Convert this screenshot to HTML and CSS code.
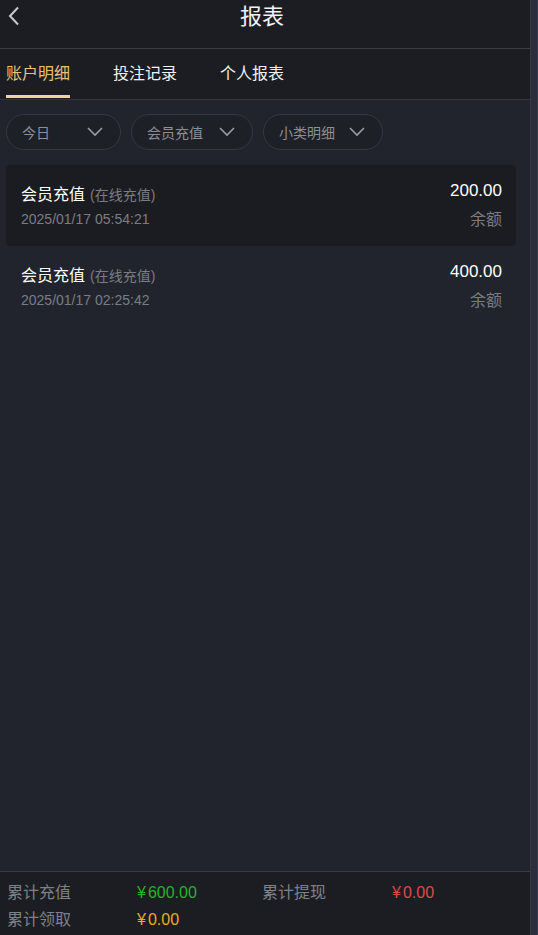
FILE: index.html
```html
<!DOCTYPE html>
<html lang="zh">
<head>
<meta charset="utf-8">
<title>报表</title>
<link rel="stylesheet" href="styles.css">
</head>
<body>
<div class="shell">
  <div class="app">
    <header class="topbar">
      <span class="back">
        <svg width="14" height="20" viewBox="0 0 14 20"><path d="M11 1.5 L3 10 L11 18.5" fill="none" stroke="#c9cad0" stroke-width="2"/></svg>
      </span>
      <h1 class="title">报表</h1>
    </header>
    <nav class="tabs">
      <span class="tab active">账户明细</span>
      <span class="tab">投注记录</span>
      <span class="tab">个人报表</span>
    </nav>
    <div class="filters">
      <div class="pill p1"><span>今日</span><svg width="16" height="10" viewBox="0 0 16 10"><path d="M1 1 L8 8 L15 1" fill="none" stroke="#9a9ca4" stroke-width="1.6"/></svg></div>
      <div class="pill p2"><span>会员充值</span><svg width="16" height="10" viewBox="0 0 16 10"><path d="M1 1 L8 8 L15 1" fill="none" stroke="#9a9ca4" stroke-width="1.6"/></svg></div>
      <div class="pill p3"><span>小类明细</span><svg width="16" height="10" viewBox="0 0 16 10"><path d="M1 1 L8 8 L15 1" fill="none" stroke="#9a9ca4" stroke-width="1.6"/></svg></div>
    </div>
    <main class="list">
      <div class="item shaded">
        <div class="left">
          <div class="name">会员充值<span class="sub">(在线充值)</span></div>
          <div class="date">2025/01/17 05:54:21</div>
        </div>
        <div class="right">
          <div class="amount">200.00</div>
          <div class="bal">余额</div>
        </div>
      </div>
      <div class="item">
        <div class="left">
          <div class="name">会员充值<span class="sub">(在线充值)</span></div>
          <div class="date">2025/01/17 02:25:42</div>
        </div>
        <div class="right">
          <div class="amount">400.00</div>
          <div class="bal">余额</div>
        </div>
      </div>
    </main>
    <footer class="summary">
      <span class="lbl">累计充值</span><span class="val green"><span class="cur">¥</span>600.00</span>
      <span class="lbl">累计提现</span><span class="val red"><span class="cur">¥</span>0.00</span>
      <span class="lbl">累计领取</span><span class="val orange"><span class="cur">¥</span>0.00</span>
    </footer>
  </div>
  <div class="scroll"></div>
</div>
</body>
</html>
```
FILE: styles.css
```css
* { box-sizing: border-box; margin: 0; padding: 0; }
html, body { width: 538px; height: 935px; overflow: hidden; }
body {
  background: #21242c;
  font-family: "Liberation Sans", "Noto Sans CJK SC", sans-serif;
  color: #fff;
}
.shell { display: flex; height: 935px; }
.app { width: 530px; display: flex; flex-direction: column; height: 935px; }
.scroll {
  width: 8px;
  background: #2c2e3b;
  border-left: 1px solid #363947;
  border-right: 1px solid #3a3d4c;
}
.topbar {
  height: 49px;
  background: #1c1d22;
  border-bottom: 1px solid #3a3c43;
  display: flex;
  align-items: flex-start;
  justify-content: center;
  position: relative;
}
.back { position: absolute; left: 7px; top: 6px; }
.title { font-size: 22px; font-weight: normal; line-height: 34px; color: #f2f2f4; margin-right: 6px; }
.tabs {
  height: 51px;
  background: #1c1d22;
  border-bottom: 1px solid #34363d;
  display: flex;
  gap: 43px;
  padding-left: 6px;
}
.tab {
  font-size: 16px;
  line-height: 48px;
  color: #f2f2f4;
  padding-top: 1px;
  height: 50px;
}
.tab.active {
  color: #e8c27d;
  border-bottom: 3px solid #f0d49e;
  height: 49px;
}
.filters { display: flex; gap: 10px; padding: 14px 6px 0; }
.pill {
  height: 36px;
  border: 1px solid #353842;
  border-radius: 18px;
  background: #1e2027;
  display: flex;
  align-items: center;
  justify-content: space-between;
  padding: 0 17px 0 15px;
  font-size: 14px;
  color: #8d8f97;
}
.p1 { width: 115px; }
.p2 { width: 122px; }
.p3 { width: 120px; }
.list { flex: 1; padding: 15px 14px 0 6px; }
.item {
  height: 81px;
  display: flex;
  justify-content: space-between;
  padding: 15px 14px 0 15px;
  border-radius: 4px;
}
.item.shaded { background: #1b1c21; }
.name { font-size: 16px; line-height: 30px; color: #fff; }
.sub { font-size: 14px; color: #7b7d85; margin-left: 5px; }
.date { font-size: 14px; line-height: 18px; color: #7b7d85; }
.right { text-align: right; }
.amount { font-size: 17px; line-height: 20px; color: #fff; margin-top: 1px; }
.bal { font-size: 16px; line-height: 22px; color: #7b7d85; margin-top: 8px; }
.summary {
  height: 64px;
  background: #1c1d22;
  border-top: 1px solid #3a3c43;
  display: grid;
  grid-template-columns: 130px 125px 130px 1fr;
  align-content: start;
  padding: 7px 0 0 7px;
  font-size: 16px;
  line-height: 27px;
}
.lbl { color: #7f8189; }
.cur { margin-right: 2px; }
.val.green { color: #22b527; }
.val.red { color: #e04848; }
.val.orange { color: #f2a626; }
```
